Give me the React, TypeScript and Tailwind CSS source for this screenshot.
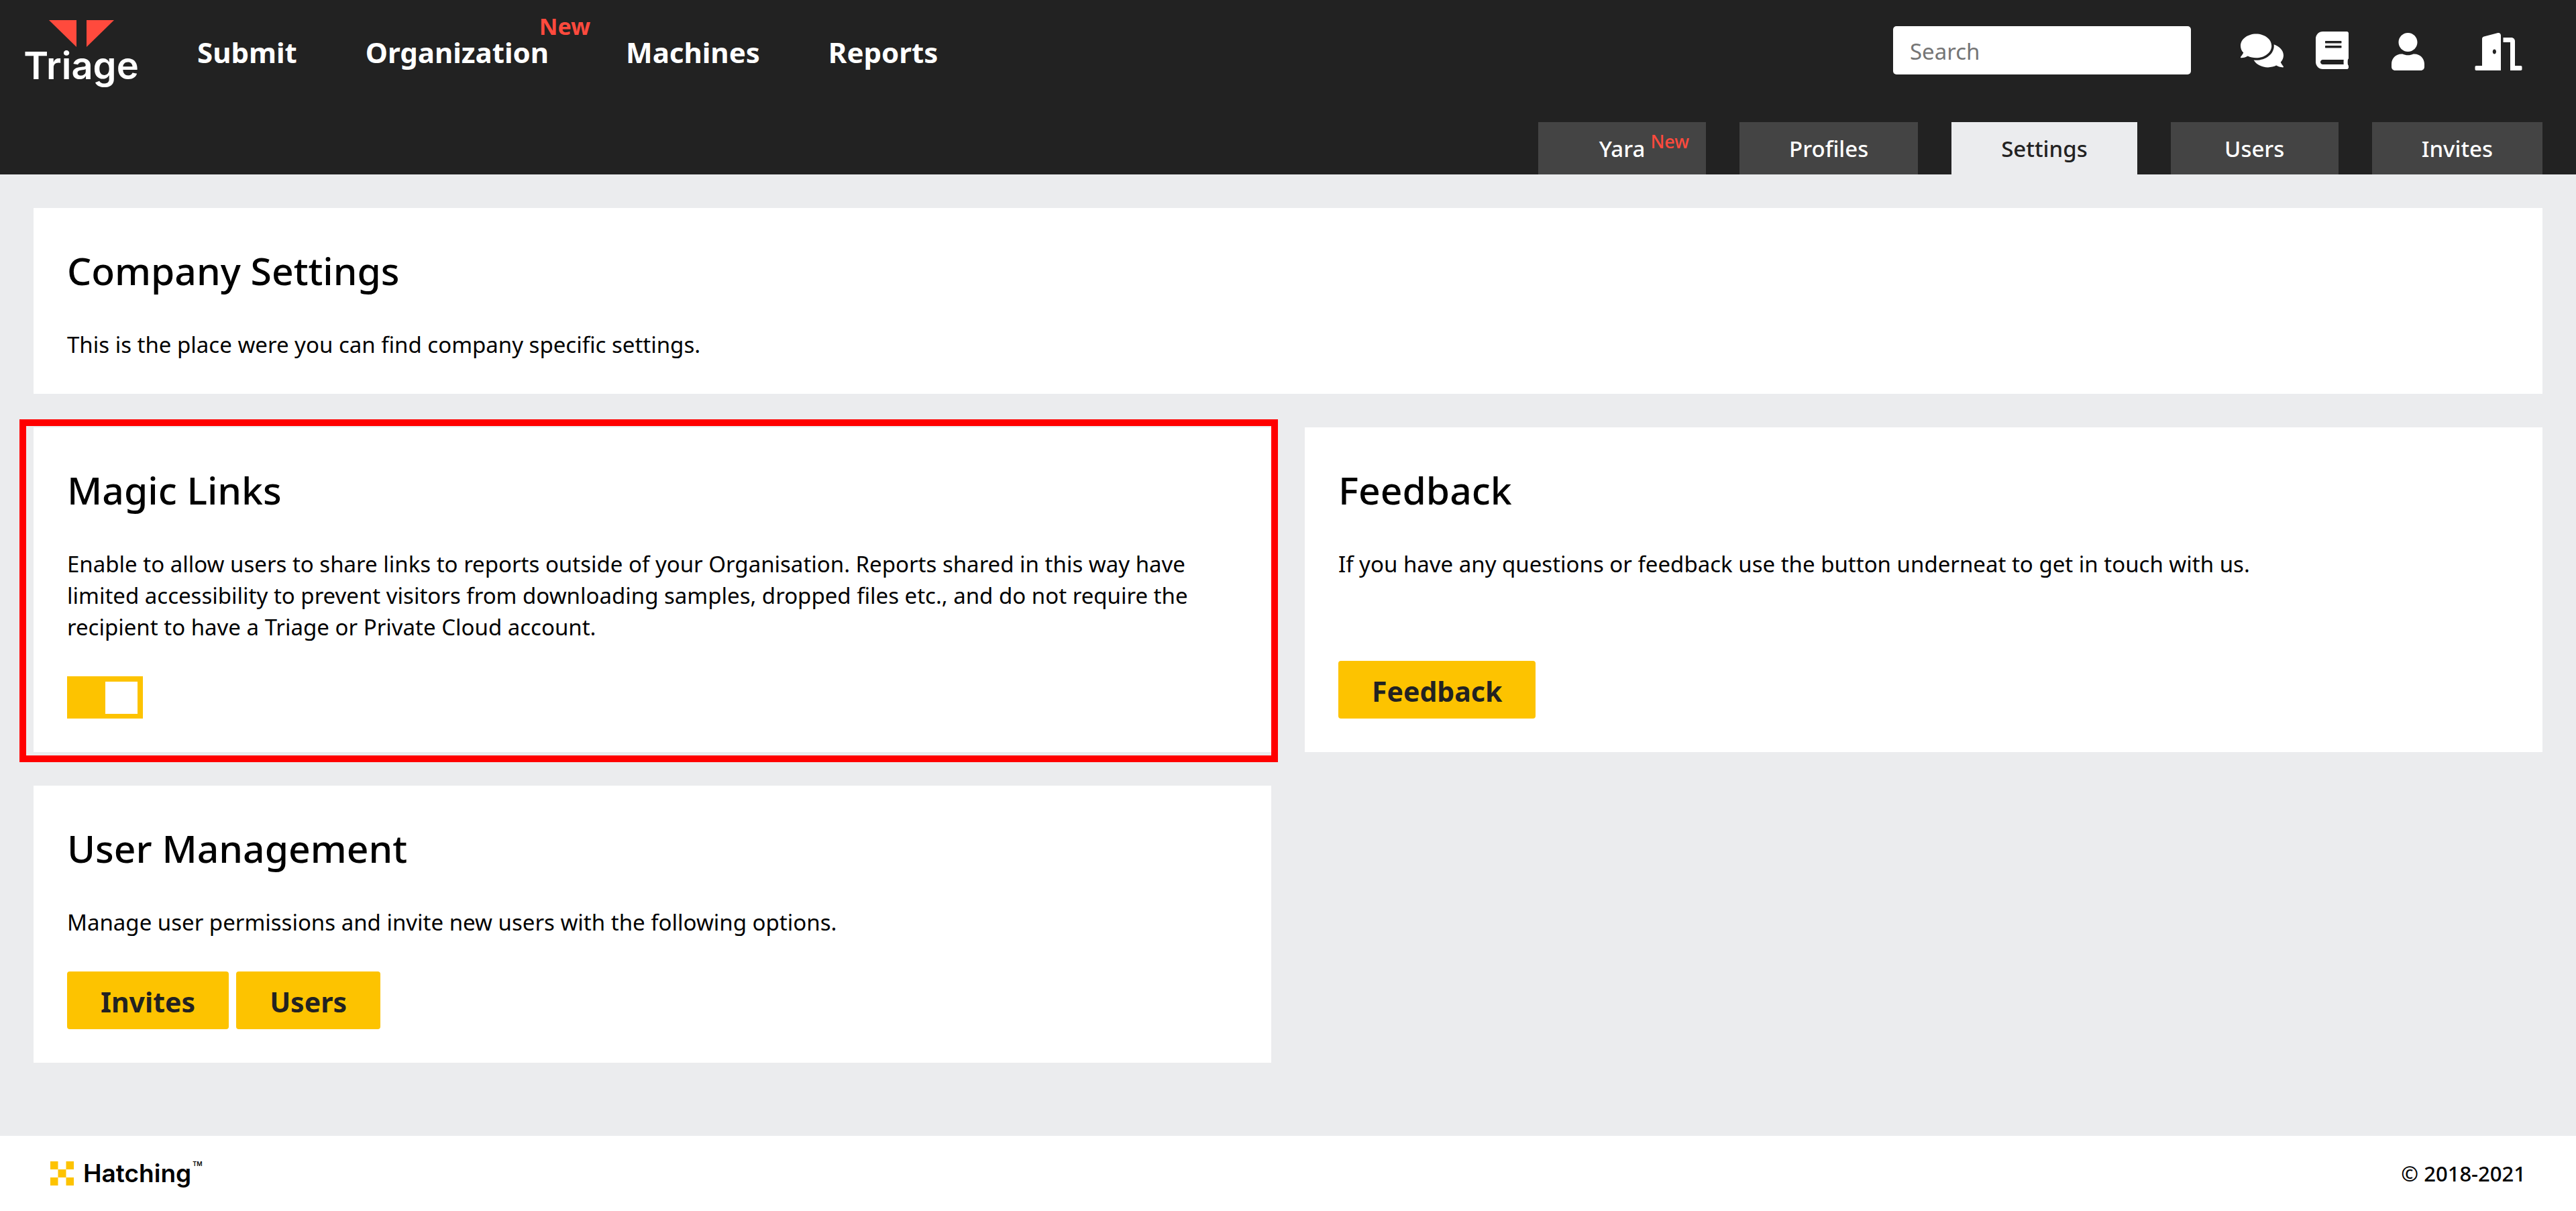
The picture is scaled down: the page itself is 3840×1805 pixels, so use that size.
import React, { useState } from "react";
import { FaBook, FaComments, FaDoorOpen, FaUser } from "react-icons/fa";

function TriageLogo() {
  return (
    <a href="#home" aria-label="Triage home" className="flex w-[170px] flex-col items-center pt-[30px] text-white">
      <svg viewBox="0 0 97 40" className="h-10 w-[97px]" aria-hidden="true">
        <path d="M0 0H41V40Z" fill="#ff4a3d" />
        <path d="M56 0H97L56 40Z" fill="#ff4a3d" />
      </svg>
      <span className="font-[Inter,sans-serif] text-[56px] leading-[56px] font-semibold">Triage</span>
    </a>
  );
}

function HatchingLogo() {
  return (
    <a href="#hatching" className="flex items-center">
      <svg viewBox="0 0 35 36" className="h-9 w-[35px]" aria-hidden="true" fill="#fdc300">
        <path d="M0 0H11.5V12H0ZM23.5 0H35V12H23.5ZM11.5 12H23.5V24H11.5ZM0 24H11.5V36H0ZM23.5 24H35V36H23.5Z" />
      </svg>
      <span className="ml-[14px] font-[Inter,sans-serif] text-[37px] leading-9 font-semibold">Hatching</span>
      <span className="ml-[2px] self-start font-[Inter,sans-serif] text-[9px] leading-2 font-semibold">TM</span>
    </a>
  );
}

function Tab({ label, active, isNew }: { label: string; active?: boolean; isNew?: boolean }) {
  return (
    <a
      href={"#" + label.toLowerCase()}
      aria-current={active ? "page" : undefined}
      className={
        "min-w-[250px] px-[74px] pt-4 pb-[15px] text-center text-[33px] leading-[47px] font-medium " +
        (active ? "bg-[#ebecee] text-[#222]" : "bg-[#444] text-white")
      }
    >
      <span className="relative">
        {label}
        {isNew && (
          <sup className="absolute -top-[2px] left-full ml-2 text-[27px] leading-7 font-medium text-[#ff4a3d]">New</sup>
        )}
      </span>
    </a>
  );
}

function Card({
  title,
  text,
  className = "",
  children,
}: {
  title: string;
  text: string;
  className?: string;
  children?: React.ReactNode;
}) {
  return (
    <section className={"relative flex flex-col bg-white p-[50px] " + className}>
      <h2 className="mb-11 text-[57px] leading-[86px] font-medium">{title}</h2>
      <p className="text-[33px] leading-[47px]">{text}</p>
      {children && <div className="mt-auto flex gap-[11px] pt-[50px]">{children}</div>}
    </section>
  );
}

function ActionButton({ children }: { children: React.ReactNode }) {
  return (
    <button
      type="button"
      className="cursor-pointer rounded-sm bg-[#fdc300] px-[50px] pt-1 text-[41px] leading-[82px] font-bold text-[#222]"
    >
      {children}
    </button>
  );
}

export default function App() {
  const [magicLinks, setMagicLinks] = useState(true);
  return (
    <div className="flex min-h-screen flex-col bg-[#ebecee] font-['Noto_Sans',sans-serif] text-black">
      <header className="bg-[#222]">
        <div className="flex h-[182px] items-start pr-20 pl-9">
          <TriageLogo />
          <nav className="ml-[88px] flex gap-[102px] pt-[50px] text-[42px] leading-[56px] font-bold text-white">
            <a href="#submit">Submit</a>
            <a href="#organization" className="relative pr-[13px]">
              Organization
              <sup className="absolute -top-[27px] left-[259px] text-[34px] leading-8 text-[#ff4a3d]">New</sup>
            </a>
            <a href="#machines">Machines</a>
            <a href="#reports">Reports</a>
          </nav>
          <input
            type="search"
            aria-label="Search"
            placeholder="Search"
            className="mt-[39px] ml-auto h-[72px] w-[444px] rounded-[5px] bg-white px-[25px] pt-[3px] text-[33px] text-[#222] placeholder:text-[#757575]"
          />
          <a href="#chat" aria-label="Chat" className="mt-[47px] ml-[74px] text-white">
            <FaComments className="h-[57px] w-16" />
          </a>
          <a href="#docs" aria-label="Documentation" className="mt-[47px] ml-12 text-white">
            <FaBook className="h-14 w-[49px]" />
          </a>
          <a href="#account" aria-label="Account" className="mt-[49px] ml-16 text-white">
            <FaUser className="h-14 w-[49px]" />
          </a>
          <a href="#logout" aria-label="Log out" className="mt-[49px] ml-[75px] text-white">
            <FaDoorOpen className="h-14 w-[71px]" />
          </a>
        </div>
        <nav aria-label="Company" className="flex justify-end gap-[50px] px-[50px]">
          <Tab label="Yara" isNew />
          <Tab label="Profiles" />
          <Tab label="Settings" active />
          <Tab label="Users" />
          <Tab label="Invites" />
        </nav>
      </header>

      <main className="grid flex-1 grid-cols-2 content-start gap-[50px] p-[50px]">
        <Card
          className="col-span-2"
          title="Company Settings"
          text="This is the place were you can find company specific settings."
        />
        <Card
          title="Magic Links"
          text="Enable to allow users to share links to reports outside of your Organisation. Reports shared in this way have limited accessibility to prevent visitors from downloading samples, dropped files etc., and do not require the recipient to have a Triage or Private Cloud account."
        >
          <input
            type="checkbox"
            role="switch"
            aria-label="Magic Links"
            checked={magicLinks}
            onChange={(e) => setMagicLinks(e.target.checked)}
            className="flex h-[63px] w-[113px] cursor-pointer appearance-none items-center bg-[#999] px-2 before:size-12 before:bg-white checked:justify-end checked:bg-[#fdc300]"
          />
          <div className="pointer-events-none absolute -top-3 -right-[10px] -bottom-[15px] -left-[21px] border-[10px] border-[#ff0000]" />
        </Card>
        <Card
          title="Feedback"
          text="If you have any questions or feedback use the button underneat to get in touch with us."
        >
          <ActionButton>Feedback</ActionButton>
        </Card>
        <Card
          title="User Management"
          text="Manage user permissions and invite new users with the following options."
        >
          <ActionButton>Invites</ActionButton>
          <ActionButton>Users</ActionButton>
        </Card>
      </main>

      <footer className="flex h-28 items-center justify-between bg-white px-[75px]">
        <HatchingLogo />
        <p className="text-[31px] leading-10 font-medium">© 2018-2021</p>
      </footer>
    </div>
  );
}
